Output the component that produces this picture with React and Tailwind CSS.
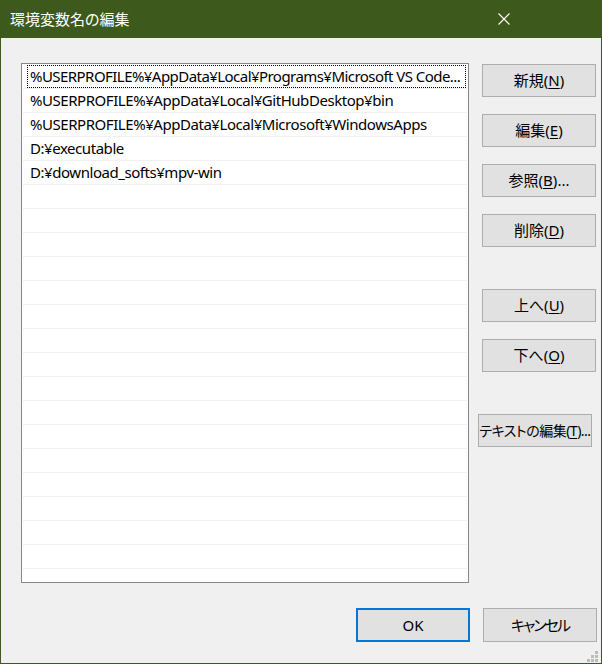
import React from 'react';

const FONT = { fontFamily: '"Noto Sans", "Noto Sans CJK JP", sans-serif' };

const paths = [
  '%USERPROFILE%¥AppData¥Local¥Programs¥Microsoft VS Code...',
  '%USERPROFILE%¥AppData¥Local¥GitHubDesktop¥bin',
  '%USERPROFILE%¥AppData¥Local¥Microsoft¥WindowsApps',
  'D:¥executable',
  'D:¥download_softs¥mpv-win',
];

function Btn({ label, mnemonic, suffix = '', className = '' }) {
  return (
    <button
      className={`w-[114px] h-[33px] shrink-0 bg-[#e1e1e1] border border-[#adadad] text-black flex items-center justify-center whitespace-nowrap [font-feature-settings:'palt'] ${className}`}
    >
      <span>
        {label}(<span className="underline underline-offset-2">{mnemonic}</span>){suffix}
      </span>
    </button>
  );
}

function Row({ text, focused }) {
  return (
    <div className="h-[24px] shrink-0 border-b border-[#f0f0f0] flex items-stretch pl-[4px] pr-[1px]">
      <div
        className={`flex-1 min-w-0 flex items-center pl-[2px] overflow-hidden whitespace-nowrap text-[15px] text-black ${
          focused
            ? 'border border-dotted border-black tracking-[-0.55px]'
            : 'border border-transparent tracking-[-0.45px]'
        }`}
      >
        <span>{text}</span>
      </div>
    </div>
  );
}

export default function App() {
  const rows = Array.from({ length: 22 }, (_, i) => paths[i] || '');

  return (
    <div className="w-[602px] h-[664px] flex flex-col select-none" style={FONT}>
      <div className="h-[38px] shrink-0 bg-[#3d5a1c] flex items-center justify-between pl-[10px] pr-[92px]">
        <span className="text-white text-[15px] leading-none [font-feature-settings:'palt']">環境変数名の編集</span>
        <svg width="12" height="12" viewBox="0 0 12 12">
          <path d="M0.5 0.5 L11.5 11.5 M11.5 0.5 L0.5 11.5" stroke="#fff" strokeWidth="1.1" />
        </svg>
      </div>

      <div className="flex-1 relative bg-[#f0f0f0] border-x border-b border-[#3d5a1c] flex flex-col">
        <div className="flex pt-[25px] pl-[20px]">
          <div className="w-[448px] h-[520px] shrink-0 bg-white border border-[#828790] p-[1px] flex flex-col overflow-hidden">
            {rows.map((t, i) => (
              <Row key={i} text={t} focused={i === 0} />
            ))}
          </div>

          <div className="ml-[13px] mt-[1px] flex flex-col text-[15px]">
            <Btn label="新規" mnemonic="N" />
            <Btn label="編集" mnemonic="E" className="mt-[17px]" />
            <Btn label="参照" mnemonic="B" suffix="..." className="mt-[17px]" />
            <Btn label="削除" mnemonic="D" className="mt-[17px]" />
            <Btn label="上へ" mnemonic="U" className="mt-[42px]" />
            <Btn label="下へ" mnemonic="O" className="mt-[17px]" />
            <Btn
              label="テキストの編集"
              mnemonic="T"
              suffix="..."
              className="mt-[42px] -ml-[4px] text-[14px] tracking-[-0.5px]"
            />
          </div>
        </div>

        <div className="flex gap-[13px] mt-[25px] pl-[355px]">
          <button className="w-[114px] h-[34px] shrink-0 bg-[#e1e1e1] border-2 border-[#0078d7] text-[15px] text-black">
            OK
          </button>
          <button className="w-[114px] h-[34px] shrink-0 bg-[#e1e1e1] border border-[#adadad] text-[15px] tracking-[-2px] text-black [font-feature-settings:'palt']">
            キャンセル
          </button>
        </div>

        <svg
          width="11"
          height="11"
          viewBox="0 0 11 11"
          className="absolute right-[3px] bottom-[1px]"
        >
          <rect x="8" y="0" width="3" height="3" fill="#bcbcbc" />
          <rect x="4" y="4" width="3" height="3" fill="#bcbcbc" />
          <rect x="8" y="4" width="3" height="3" fill="#bcbcbc" />
          <rect x="0" y="8" width="3" height="3" fill="#bcbcbc" />
          <rect x="4" y="8" width="3" height="3" fill="#bcbcbc" />
          <rect x="8" y="8" width="3" height="3" fill="#bcbcbc" />
        </svg>
      </div>
    </div>
  );
}
